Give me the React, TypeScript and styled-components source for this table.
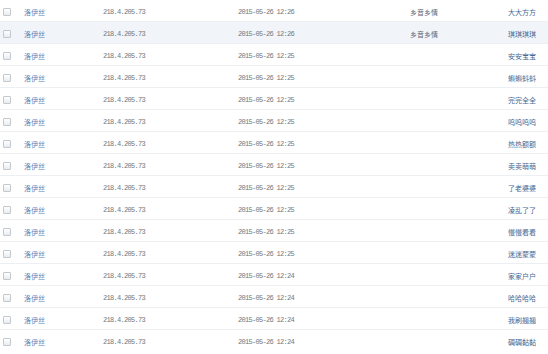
import styled, { createGlobalStyle } from "styled-components";

interface LogRow {
  name: string;
  ip: string;
  time: string;
  group: string;
  nick: string;
}

const GlobalStyles = createGlobalStyle`
  html, body {
    margin: 0;
    padding: 0;
    background: #ffffff;
  }
  body {
    font-family: "Noto Sans CJK SC", "Liberation Sans", sans-serif;
  }
`;

const Table = styled.div`
  width: 548px;
  display: flex;
  flex-direction: column;
`;

const Row = styled.div<{ $hover?: boolean }>`
  display: grid;
  grid-template-columns: 24px 79px 135px 172px 98px 1fr;
  align-items: center;
  height: 21px;
  padding-top: 1px;
  box-sizing: content-box;
  border-top: 1px solid #edf0f3;
  margin-top: -1px;
  background: ${({ $hover }) => ($hover ? "#f1f5fa" : "#ffffff")};
`;

const CheckCell = styled.div`
  display: flex;
  align-items: center;
  padding-left: 3px;
`;

const CheckBox = styled.span`
  box-sizing: border-box;
  width: 8px;
  height: 8px;
  border: 1px solid #c3c8ce;
  border-radius: 1px;
  background: linear-gradient(#ffffff, #e9ecef);
`;

const Cjk = styled.span<{ $color: string }>`
  font-family: "Noto Sans CJK SC", "Liberation Sans", sans-serif;
  font-size: 7px;
  line-height: 10px;
  color: ${({ $color }) => $color};
  white-space: nowrap;
`;

const Mono = styled.span`
  font-family: "Liberation Mono", monospace;
  font-size: 7px;
  letter-spacing: -0.7px;
  line-height: 10px;
  color: #73777d;
  white-space: nowrap;
`;

const rows: LogRow[] = [
  { name: "洛伊丝", ip: "218.4.205.73", time: "2015-05-26 12:26", group: "乡音乡情", nick: "大大方方" },
  { name: "洛伊丝", ip: "218.4.205.73", time: "2015-05-26 12:26", group: "乡音乡情", nick: "琪琪琪琪" },
  { name: "洛伊丝", ip: "218.4.205.73", time: "2015-05-26 12:25", group: "", nick: "安安宝宝" },
  { name: "洛伊丝", ip: "218.4.205.73", time: "2015-05-26 12:25", group: "", nick: "蝌蝌蚪蚪" },
  { name: "洛伊丝", ip: "218.4.205.73", time: "2015-05-26 12:25", group: "", nick: "完完全全" },
  { name: "洛伊丝", ip: "218.4.205.73", time: "2015-05-26 12:25", group: "", nick: "呜呜呜呜" },
  { name: "洛伊丝", ip: "218.4.205.73", time: "2015-05-26 12:25", group: "", nick: "热热额额" },
  { name: "洛伊丝", ip: "218.4.205.73", time: "2015-05-26 12:25", group: "", nick: "卖卖萌萌" },
  { name: "洛伊丝", ip: "218.4.205.73", time: "2015-05-26 12:25", group: "", nick: "了老婆婆" },
  { name: "洛伊丝", ip: "218.4.205.73", time: "2015-05-26 12:25", group: "", nick: "凌乱了了" },
  { name: "洛伊丝", ip: "218.4.205.73", time: "2015-05-26 12:25", group: "", nick: "慢慢看看" },
  { name: "洛伊丝", ip: "218.4.205.73", time: "2015-05-26 12:25", group: "", nick: "迷迷蒙蒙" },
  { name: "洛伊丝", ip: "218.4.205.73", time: "2015-05-26 12:24", group: "", nick: "家家户户" },
  { name: "洛伊丝", ip: "218.4.205.73", time: "2015-05-26 12:24", group: "", nick: "哈哈哈哈" },
  { name: "洛伊丝", ip: "218.4.205.73", time: "2015-05-26 12:24", group: "", nick: "我刷翘翘" },
  { name: "洛伊丝", ip: "218.4.205.73", time: "2015-05-26 12:24", group: "", nick: "碉碉黏黏" },
];

function App() {
  return (
    <>
      <GlobalStyles />
      <Table>
        {rows.map((row, i) => (
          <Row key={i} $hover={i === 1}>
            <CheckCell>
              <CheckBox />
            </CheckCell>
            <Cjk $color="#5583b7">{row.name}</Cjk>
            <Mono>{row.ip}</Mono>
            <Mono>{row.time}</Mono>
            <Cjk $color="#62676e">{row.group}</Cjk>
            <Cjk $color="#476892">{row.nick}</Cjk>
          </Row>
        ))}
      </Table>
    </>
  );
}

export default App;
